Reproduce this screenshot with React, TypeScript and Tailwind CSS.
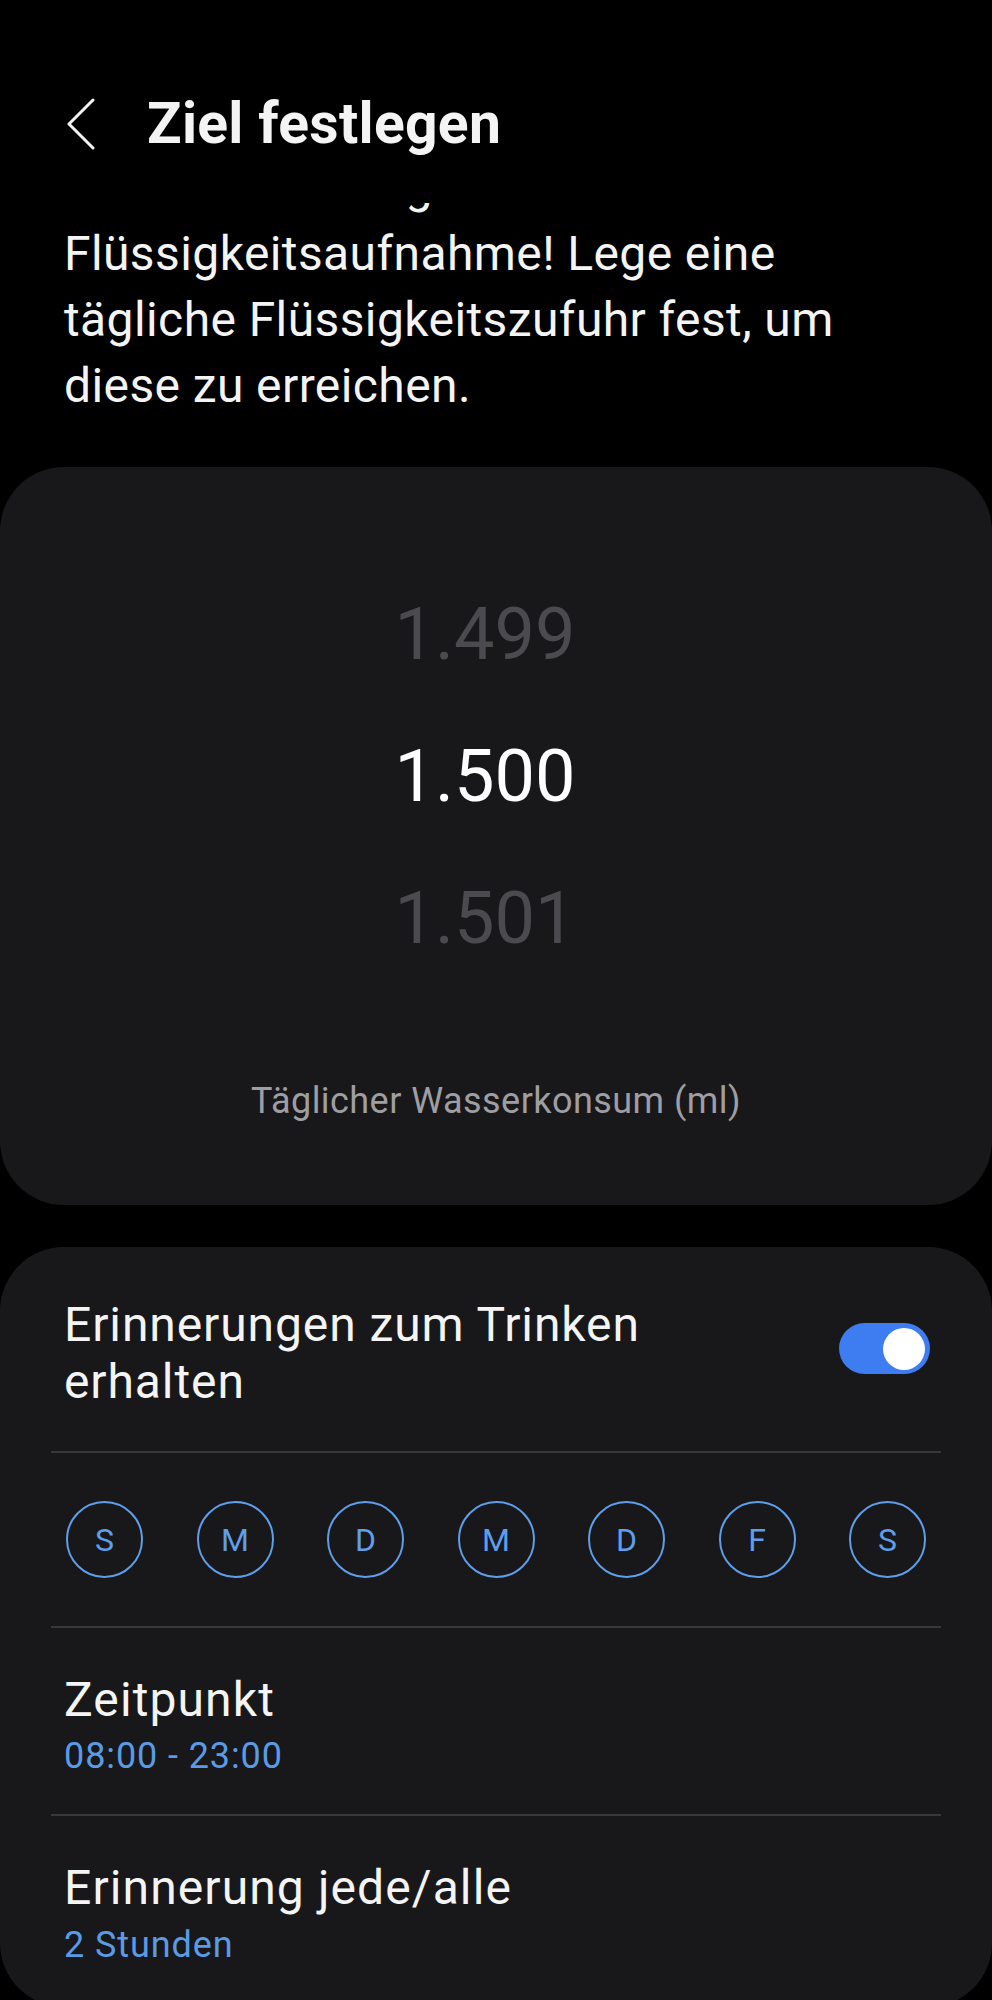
import React from "react";

const days = ["S", "M", "D", "M", "D", "F", "S"];

export default function App() {
  return (
    <div
      className="w-[992px] h-[2000px] bg-black text-[#f4f4f4] overflow-hidden flex flex-col"
      style={{ fontFamily: "Roboto, 'Noto Sans', sans-serif" }}
    >
      {/* Header */}
      <div className="h-[203px] pt-[45px] flex items-center shrink-0">
        <div className="w-[147px] flex justify-start pl-[66px]">
          <svg width="30" height="52" viewBox="0 0 30 52" fill="none">
            <path d="M27 2 L3 26 L27 50" stroke="#f4f4f4" strokeWidth="3" strokeLinecap="round" strokeLinejoin="round" />
          </svg>
        </div>
        <h1 className="text-[57px] font-bold leading-[60px] tracking-[0.3px]">Ziel festlegen</h1>
      </div>

      {/* Scrolled content */}
      <div className="flex-1 min-h-0 overflow-hidden flex flex-col">
        {/* previous line, scrolled under the header: only its descender shows */}
        <div className="h-[16px] shrink-0 overflow-hidden flex items-end px-[64px]">
          <div className="text-[48px] leading-[66px] tracking-[0.4px] whitespace-nowrap">
            Achte auf die tägliche
          </div>
        </div>
        <p className="mt-[2px] px-[64px] text-[48px] leading-[66px] tracking-[0.4px]">
          Flüssigkeitsaufnahme! Lege eine
          <br />
          tägliche Flüssigkeitszufuhr fest, um
          <br />
          diese zu erreichen.
        </p>

        {/* Picker card */}
        <div className="mt-[48px] h-[738px] rounded-[64px] bg-[#18181a] pt-[97px] flex flex-col items-center shrink-0">
          <div className="flex flex-col items-center pr-[22px]">
            <div className="h-[142px] leading-[142px] text-[72px] text-[#4b4b4f]">1.499</div>
            <div className="h-[142px] leading-[142px] text-[72px] text-white">1.500</div>
            <div className="h-[142px] leading-[142px] text-[72px] text-[#4b4b4f]">1.501</div>
          </div>
          <div className="mt-[91px] text-[36px] leading-[40px] tracking-[0.45px] text-[#9e9ea3]">
            Täglicher Wasserkonsum (ml)
          </div>
        </div>

        {/* Settings card */}
        <div className="mt-[42px] rounded-[64px] bg-[#18181a] flex flex-col shrink-0 pb-[40px]">
          <div className="flex items-start justify-between pl-[64px] pr-[62px] pt-[49px]">
            <div className="text-[48px] leading-[57px] tracking-[0.9px]">
              Erinnerungen zum Trinken
              <br />
              erhalten
            </div>
            <div className="mt-[27px] w-[91px] h-[51px] rounded-full bg-[#3d7cf1] flex items-center justify-end pr-[5px]">
              <div className="w-[42px] h-[42px] rounded-full bg-white" />
            </div>
          </div>

          <div className="mx-[51px] mt-[41px] h-[2px] bg-[#38383b]" />

          <div className="flex justify-between px-[66px] pt-[48px] pb-[48px]">
            {days.map((d, i) => (
              <div
                key={i}
                className="w-[77px] h-[77px] rounded-full border-[2.5px] border-[#5e9eea] flex items-center justify-center text-[32px] text-[#5e9eea]"
              >
                {d}
              </div>
            ))}
          </div>

          <div className="mx-[51px] h-[2px] bg-[#38383b]" />

          <div className="px-[64px] pt-[45px] pb-[36px]">
            <div className="text-[48px] leading-[54px] tracking-[1.1px]">Zeitpunkt</div>
            <div className="mt-[7px] text-[36px] leading-[44px] tracking-[0.9px] text-[#5a9be6]">08:00 - 23:00</div>
          </div>

          <div className="mx-[51px] h-[2px] bg-[#38383b]" />

          <div className="px-[64px] pt-[45px]">
            <div className="text-[48px] leading-[54px] tracking-[1.1px]">Erinnerung jede/alle</div>
            <div className="mt-[8px] text-[36px] leading-[44px] tracking-[0.9px] text-[#5a9be6]">2 Stunden</div>
          </div>
        </div>
      </div>
    </div>
  );
}
